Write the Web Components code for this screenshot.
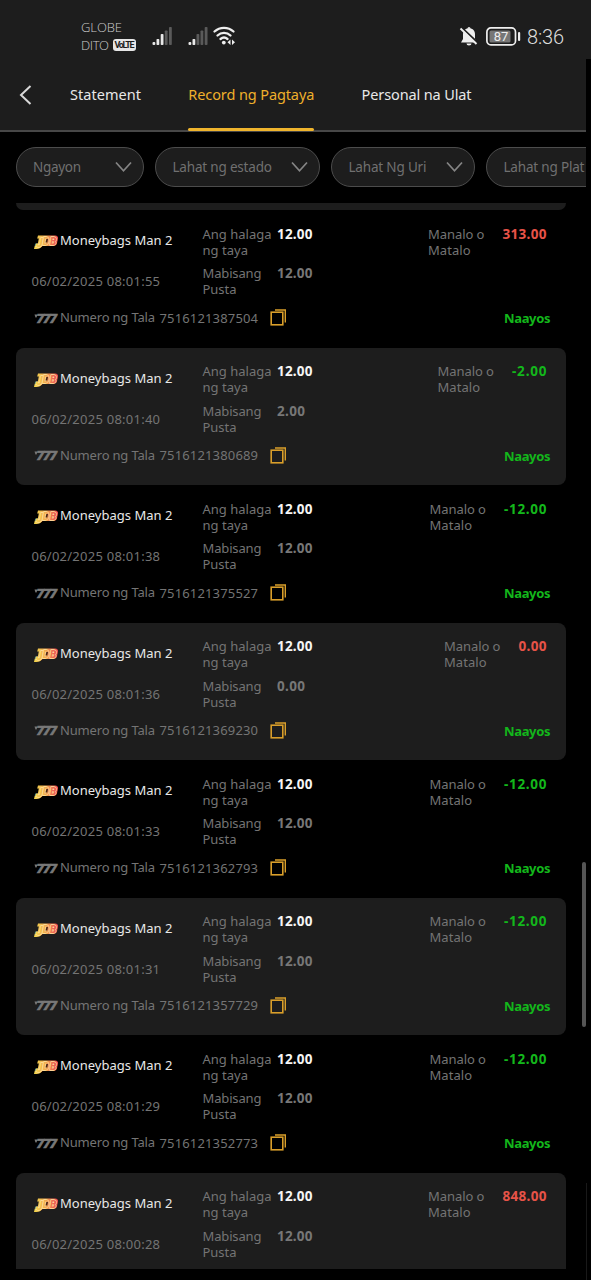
<!DOCTYPE html>
<html lang="fil">
<head>
<meta charset="utf-8">
<title>Record ng Pagtaya</title>
<style>
html,body{margin:0;background:#000;height:1280px;overflow:hidden}
body{font-family:"Noto Sans",sans-serif;color:#747474}
</style>
</head>
<body>
<bet-app></bet-app>
<script>
const define = (name, html, setup) => customElements.define(name, class extends HTMLElement {
  connectedCallback() {
    if (this.shadowRoot) return;
    const root = this.attachShadow({mode: 'open'});
    root.innerHTML = typeof html === 'function' ? html(this) : html;
    if (setup) setup(this, root);
  }
});

/* Text whose tracking is adjusted so that it fills the width given in "w". */
define('fit-text', `<style>:host{display:inline-block;white-space:nowrap;flex:none}span{display:inline-block}</style><span><slot></slot></span>`, (el, root) => {
  const s = root.querySelector('span'), w = +el.getAttribute('w');
  el.style.width = w + 'px';
  const n = el.textContent.length;
  s.style.letterSpacing = ((w - s.getBoundingClientRect().width) / (n - 1)).toFixed(3) + 'px';
});

define('status-bar', `<style>
:host{display:flex;height:59px;background:#1d1d1d;box-sizing:border-box;padding:0 27px 0 81px;color:#ccc;font:300 13px "Open Sans",sans-serif}
.names{padding-top:18px;width:71px;line-height:18px;font-size:13px}
.row{display:flex;align-items:center}
.volte{background:#e6e6e6;color:#1d1d1d;border-radius:3px;height:12px;width:23px;margin-left:4px;display:flex;justify-content:center;align-items:center;font:700 9px Roboto,sans-serif}
svg{display:block;flex:none}
.sig{margin-top:26px}
.bell{margin:26px 7px 0 auto}
.bat{margin-top:27px;display:grid;width:36px;height:19px}
.bat>*{grid-area:1/1}
.bat span{z-index:1;width:30px;text-align:center;font:400 13px/19px Roboto,sans-serif;color:#eee}
.time{margin:22px 0 0 5px;font:300 20px/30px Roboto,sans-serif;color:#ddd}
</style>
<div class="names"><div><fit-text w="41">GLOBE</fit-text></div><div class="row"><fit-text w="28">DITO</fit-text><span class="volte"><fit-text w="20">VoLTE</fit-text></span></div></div>
<svg class="sig" width="84" height="22" viewBox="0 0 84 22">
<g fill="#e8e8e8"><rect x="0.500" y="16" width="2.800" height="3" rx="1"/><rect x="4.500" y="13" width="2.800" height="6" rx=".8"/><rect x="8.700" y="8" width="2.800" height="11" rx=".8"/><rect x="36.500" y="16" width="2.800" height="3" rx="1"/><rect x="40.500" y="13" width="2.800" height="6" rx=".8"/></g>
<g fill="#5a5a5a"><rect x="12.800" y="4.500" width="2.800" height="14.500" rx=".8"/><rect x="17" y="1" width="2.800" height="18" rx=".8"/><rect x="44.500" y="8" width="2.800" height="11" rx=".8"/><rect x="48.500" y="4.500" width="2.800" height="14.500" rx=".8"/><rect x="52.700" y="1" width="2.800" height="18" rx=".8"/></g>
<g fill="none" stroke="#eee" stroke-width="2.300" stroke-linecap="round"><path d="M62.500 5.500a14 14 0 0 1 19 0M65.500 9.500a9.500 9.500 0 0 1 13 0M68.500 13a5.500 5.500 0 0 1 7 0"/></g>
<circle cx="71.800" cy="16.600" r="1.900" fill="#eee"/><path d="M78.500 13.500v5.500l-3-2.750zM80 13.500v5.500l3-2.750z" fill="#eee"/></svg>
<svg class="bell" width="20" height="21" viewBox="0 0 20 21"><path d="M10 2c4 .3 6 3 6 6.500V13l2 3.500H2L4 13V8.500C4 5 6 2.300 10 2z" fill="#eee"/><path d="M8.500 2.600a1.500 1.500 0 0 1 3 0M7.500 17.500h5a2.500 2 0 0 1-5 0z" fill="#eee"/><path d="M2.500 1.500L19 17" stroke="#1d1d1d" stroke-width="2"/><path d="M1.500 2.500L17.500 18" stroke="#eee" stroke-width="1.900"/></svg>
<div class="bat"><svg width="36" height="19" viewBox="0 0 36 19"><rect x=".9" y=".9" width="28.600" height="17" rx="4" fill="none" stroke="#eee" stroke-width="1.700"/><rect x="3.500" y="3.500" width="21" height="12" rx="1.500" fill="#777"/><rect x="32" y="5" width="2.200" height="9" rx="1" fill="#eee"/></svg><span>87</span></div>
<div class="time"><fit-text w="37">8:36</fit-text></div>`);

define('tab-item', el => `<style>
:host{display:block;height:71px;position:relative;font-size:14.500px;line-height:71px;color:${el.hasAttribute('active') ? '#efb02b' : '#e8e8e8'}}
i{position:absolute;left:0;right:0;bottom:-0.500px;height:3px;border-radius:1.500px;background:#f0b52d}
</style><slot></slot>${el.hasAttribute('active') ? '<i></i>' : ''}`);

define('tab-bar', `<style>
:host{display:flex;width:586px;height:73px;box-sizing:border-box;background:#1d1d1d;border-bottom:2px solid #474747;padding-left:18px}
svg{margin-top:25px;margin-right:36px;flex:none}
tab-item+tab-item{margin-left:47.300px}
</style>
<svg width="16" height="22" viewBox="0 0 16 22"><path d="M12.500 2L3 11l9.500 9" fill="none" stroke="#d8d8d8" stroke-width="2"/></svg>
<tab-item><fit-text w="71">Statement</fit-text></tab-item>
<tab-item active><fit-text w="126">Record ng Pagtaya</fit-text></tab-item>
<tab-item><fit-text w="110">Personal na Ulat</fit-text></tab-item>`);

define('filter-pill', `<style>
:host{display:flex;flex:none;box-sizing:border-box;height:40px;border:1.500px solid #4c4c4c;border-radius:20px;background:#1d1d1d;align-items:center;justify-content:space-between;padding:0 11.500px 0 16px;font-size:13.500px;color:#707070}
</style><slot></slot><svg width="17" height="12" viewBox="0 0 17 12"><path d="M1 1.500l7.500 8.300L16 1.500" fill="none" stroke="#858585" stroke-width="1.700"/></svg>`);

define('filter-row', `<style>
:host{display:flex;width:586px;height:71px;box-sizing:border-box;padding:15px 0 0 16px;gap:11.200px;overflow:hidden}
</style>
<filter-pill style="width:128.300px"><fit-text w="48">Ngayon</fit-text></filter-pill>
<filter-pill style="width:164.800px"><fit-text w="99.5">Lahat ng estado</fit-text></filter-pill>
<filter-pill style="width:143.800px"><fit-text w="78">Lahat Ng Uri</fit-text></filter-pill>
<filter-pill style="width:170px"><fit-text w="81">Lahat ng Plat</fit-text></filter-pill>`);

define('jdb-logo', `<style>:host{display:block;width:26px;height:16px}</style>
<svg width="26" height="16" viewBox="0 0 26 16"><defs><linearGradient id="g" gradientUnits="userSpaceOnUse" x1="0" y1="0" x2="25" y2="0"><stop offset="0" stop-color="#f3dc4c"/><stop offset=".5" stop-color="#f2ab50"/><stop offset="1" stop-color="#ea3f52"/></linearGradient></defs>
<path d="M5 1.500H22Q25.500 1.800 25 4.500L24 9Q23.300 12 20 12H9Q7.500 15 3.500 15H1L1.800 11.500H4.500L5.800 4.500H4.200Z" fill="url(#g)"/>
<g font-family="Roboto,sans-serif" font-weight="900" font-style="italic" stroke-linejoin="round">
<g fill="url(#g)" stroke="#ffe3a0" stroke-width="1.300" paint-order="stroke"><text x="3" y="12.500" font-size="12.500">J</text><text x="9.800" y="10.500" font-size="10">D</text><text x="17" y="10.500" font-size="10">B</text></g></g>
<path d="M13.300 5h1.700l-.7 3.500h-1.700z" fill="#4c2416"/></svg>`);

define('sevens-icon', `<style>:host{display:block;width:26px;height:16px}</style>
<svg width="26" height="16" viewBox="0 0 26 16"><g font-family="Roboto,sans-serif" font-weight="900" font-style="italic" font-size="13.500" fill="#787878" stroke="#787878" stroke-width=".7"><text y="13.200"><tspan x="2.500">7</tspan><tspan x="9">7</tspan><tspan x="15.500">7</tspan></text></g><path d="M.5 4.500h3l-1 3H1.500z" fill="#787878"/></svg>`);

define('copy-icon', `<style>:host{display:block;width:17px;height:17px}</style>
<svg width="17" height="17" viewBox="0 0 17 17" fill="none" stroke="#d99e2a"><rect x="1.200" y="3.200" width="11.600" height="12.600" stroke-width="1.600"/><path d="M5 1h10.300v12.500" stroke-width="1.400"/></svg>`);

define('bet-card', el => {
  const [date, valid, result, id] = el.getAttribute('data').split('|');
  const vw = valid.length > 4 ? 35.5 : 28;
  const rw = {'313.00':44,'848.00':44,'-2.00':34.5,'-12.00':42.5,'0.00':28}[result];
  const color = result[0] === '-' ? '#13b71b' : '#e75348';
  return `<style>
:host{display:block;box-sizing:border-box;width:550px;height:137.500px;padding:15.500px 16px 0 15.500px;border-radius:8px;font-size:13px;line-height:16px;color:#747474}
:host([shade]){background:#1d1d1d}
.top{display:flex;height:83px}
.game{width:171px;flex:none;padding-top:6.500px}
.name{display:flex;color:#e8e8e8;height:41px}
.name jdb-logo{margin:2px 0 0 1.500px}
.name fit-text{margin-left:1px}
.pair{display:flex;height:39.500px}
.pair>div:first-child{width:74.500px;flex:none}
b{color:#777;font-size:13.500px}
.w{color:#f5f5f5}
.win{display:flex;margin-left:auto;margin-right:3.500px}
.win>div{width:74.500px}
.win b{color:${color}}
.foot{display:flex}
.foot sevens-icon{margin:1px 0 0 2.500px}
.num{margin-top:.5px}
.id{margin:1px 0 0 4.500px}
copy-icon{margin:.5px .5px 0 12px}
.ok{margin:1.500px -.5px 0 auto;color:#13b71b;font-size:13px}
</style>
<div class="top">
<div class="game"><div class="name"><jdb-logo></jdb-logo><fit-text w="112.5">Moneybags Man 2</fit-text></div><fit-text w="128.5">${date}</fit-text></div>
<div><div class="pair"><div><fit-text w="69">Ang halaga</fit-text><fit-text w="45.5">ng taya</fit-text></div><b class="w"><fit-text w="35.5">12.00</fit-text></b></div>
<div class="pair"><div><fit-text w="59">Mabisang</fit-text><fit-text w="34">Pusta</fit-text></div><b><fit-text w="${vw}">${valid}</fit-text></b></div></div>
<div class="win"><div><fit-text w="56.5">Manalo o</fit-text><fit-text w="42.5">Matalo</fit-text></div><b><fit-text w="${rw}">${result}</fit-text></b></div>
</div>
<div class="foot"><sevens-icon></sevens-icon><fit-text class="num" w="95">Numero ng Tala</fit-text><fit-text class="id" w="98.5">${id}</fit-text><copy-icon></copy-icon><b class="ok"><fit-text w="46.5">Naayos</fit-text></b></div>`;
});

define('bet-list', `<style>
:host{display:block;height:1066px;overflow:hidden;padding-left:16px}
.prev{height:7.500px;width:550px;background:#1d1d1d;border-radius:0 0 8px 8px}
</style><div class="prev"></div>` + [
  '06/02/2025 08:01:55|12.00|313.00|7516121387504',
  '06/02/2025 08:01:40|2.00|-2.00|7516121380689',
  '06/02/2025 08:01:38|12.00|-12.00|7516121375527',
  '06/02/2025 08:01:36|0.00|0.00|7516121369230',
  '06/02/2025 08:01:33|12.00|-12.00|7516121362793',
  '06/02/2025 08:01:31|12.00|-12.00|7516121357729',
  '06/02/2025 08:01:29|12.00|-12.00|7516121352773',
  '06/02/2025 08:00:28|12.00|848.00|'
].map((d, i) => `<bet-card data="${d}"${i % 2 ? ' shade' : ''}${i === 7 ? ' class="last"' : ''}></bet-card>`).join(''),
  (el, root) => root.querySelector('.last').shadowRoot.querySelector('.foot').remove());

define('bet-app', `<style>
:host{display:block;width:591px;height:1280px;background:#000;position:relative;overflow:hidden}
bet-list{margin-top:-.5px}
.thumb{position:absolute;left:582px;top:862px;width:4px;height:165px;border-radius:2px;background:#555}
.edge{position:absolute;left:586px;top:1183px;width:1px;height:97px;background:#191919}
</style><status-bar></status-bar><tab-bar></tab-bar><filter-row></filter-row><bet-list></bet-list><div class="thumb"></div><div class="edge"></div>`);
</script>
</body>
</html>
